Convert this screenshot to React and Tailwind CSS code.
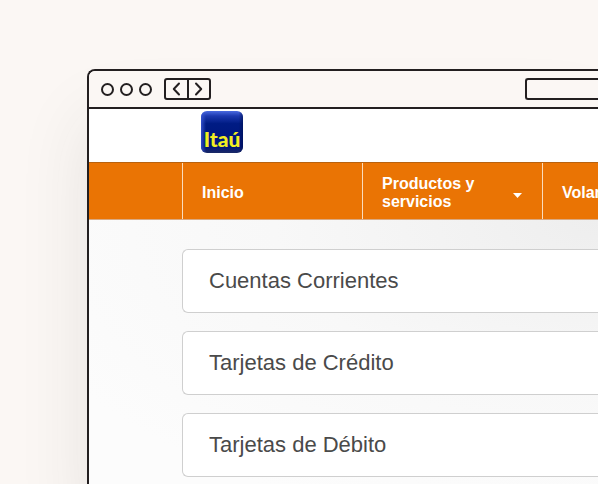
// src/App.jsx
import React from 'react';

const products = ['Cuentas Corrientes', 'Tarjetas de Crédito', 'Tarjetas de Débito'];

const BrowserBar = () => {
  return (
    <div className="flex items-center h-[38px] pl-3 border-b-2 border-[#231f20] bg-[#fbf7f4] rounded-tl-md">
      {/* Window dots */}
      <div className="flex gap-[6px] mr-3">
        <span className="size-[13px] rounded-full border-2 border-[#231f20]" />
        <span className="size-[13px] rounded-full border-2 border-[#231f20]" />
        <span className="size-[13px] rounded-full border-2 border-[#231f20]" />
      </div>

      {/* Back / forward */}
      <div className="flex shrink-0 w-[47px] h-[22px] rounded-[3px] border-2 border-[#231f20]">
        <button type="button" aria-label="Back" className="flex-1 flex items-center justify-center border-r-2 border-[#231f20]">
          <svg className="w-[9px] h-[14px]" viewBox="0 0 9 14" fill="none" stroke="#231f20" strokeWidth="2">
            <path strokeLinecap="round" strokeLinejoin="round" d="M7 1.5L1.8 7L7 12.5" />
          </svg>
        </button>
        <button type="button" aria-label="Forward" className="flex-1 flex items-center justify-center">
          <svg className="w-[9px] h-[14px]" viewBox="0 0 9 14" fill="none" stroke="#231f20" strokeWidth="2">
            <path strokeLinecap="round" strokeLinejoin="round" d="M2 1.5L7.2 7L2 12.5" />
          </svg>
        </button>
      </div>

      {/* Address field */}
      <input
        type="text"
        aria-label="Address"
        className="ml-auto w-[73px] h-[22px] rounded-l-[3px] border-2 border-r-0 border-[#231f20] bg-transparent"
      />
    </div>
  );
};

const Logo = () => {
  return (
    <svg className="w-[42px] h-[42px]" viewBox="0 0 42 42" role="img" aria-label="Itaú">
      <defs>
        <linearGradient id="tile" x1="0" y1="0" x2="0" y2="1">
          <stop offset="0" stopColor="#4a6ae0" />
          <stop offset="0.12" stopColor="#1c38ae" />
          <stop offset="0.3" stopColor="#001c84" />
          <stop offset="0.85" stopColor="#001478" />
          <stop offset="1" stopColor="#1b2a66" />
        </linearGradient>
        <linearGradient id="shine" x1="0" y1="0" x2="1" y2="0">
          <stop offset="0" stopColor="#3c5ad8" stopOpacity="0.8" />
          <stop offset="0.12" stopColor="#3c5ad8" stopOpacity="0" />
          <stop offset="0.9" stopColor="#001050" stopOpacity="0" />
          <stop offset="1" stopColor="#001050" stopOpacity="0.6" />
        </linearGradient>
      </defs>
      <rect width="42" height="42" rx="6" fill="url(#tile)" />
      <rect width="42" height="42" rx="6" fill="url(#shine)" />
      <text x="21" y="36" textAnchor="middle" fontFamily="Lato, sans-serif" fontWeight="900" fontSize="21" fill="#f2ee22">
        Itaú
      </text>
    </svg>
  );
};

const App = () => {
  return (
    <div className="min-h-screen flex overflow-hidden bg-[#fbf7f4] pt-[69px] pl-[87px] font-['Liberation_Sans',Arial,sans-serif]">
      <div className="flex-1 min-w-0 flex flex-col border-t-2 border-l-2 border-[#231f20] rounded-tl-lg bg-white shadow-[0_50px_70px_rgba(50,50,50,0.1)]">
        <BrowserBar />

        {/* Header */}
        <header className="h-[53px] pl-28 pt-[2px] bg-white">
          <a href="#" className="inline-block">
            <Logo />
          </a>
        </header>

        {/* Navigation */}
        <nav className="flex h-[58px] pl-[93px] overflow-hidden bg-[#ea7404] border-t border-t-[#b8620f] border-b border-b-[#d9a982] text-white text-base leading-[18px] font-bold">
          <a href="#" className="shrink-0 w-[180px] flex items-center pl-[19px] pt-1 border-l border-[#fbdcbc]">
            Inicio
          </a>
          <a href="#" className="shrink-0 w-[180px] flex items-center justify-between pl-[19px] pr-5 pt-1 border-l border-[#fbdcbc]">
            <span className="w-[104px]">Productos y servicios</span>
            <svg className="w-[9px] h-[5px] mt-1" viewBox="0 0 9 5" fill="currentColor">
              <path d="M0 0h9L4.5 5z" />
            </svg>
          </a>
          <a href="#" className="shrink-0 w-[180px] flex items-center pl-[19px] pt-1 border-l border-[#fbdcbc]">
            Volantes
          </a>
        </nav>

        {/* Product list */}
        <main className="flex-1 pt-[29px] pl-[93px] bg-[radial-gradient(ellipse_at_top_right,#eeeeee_0%,#f8f8f8_45%,#fcfcfc_85%)]">
          <ul className="flex flex-col gap-[18px]">
            {products.map((name) => (
              <li key={name}>
                <a
                  href="#"
                  className="flex items-center h-16 pl-[26px] bg-white border border-r-0 border-[#cfcfcf] rounded-l-md text-[22px] leading-7 text-[#4a4a4a]"
                >
                  {name}
                </a>
              </li>
            ))}
          </ul>
        </main>
      </div>
    </div>
  );
};

export default App;
